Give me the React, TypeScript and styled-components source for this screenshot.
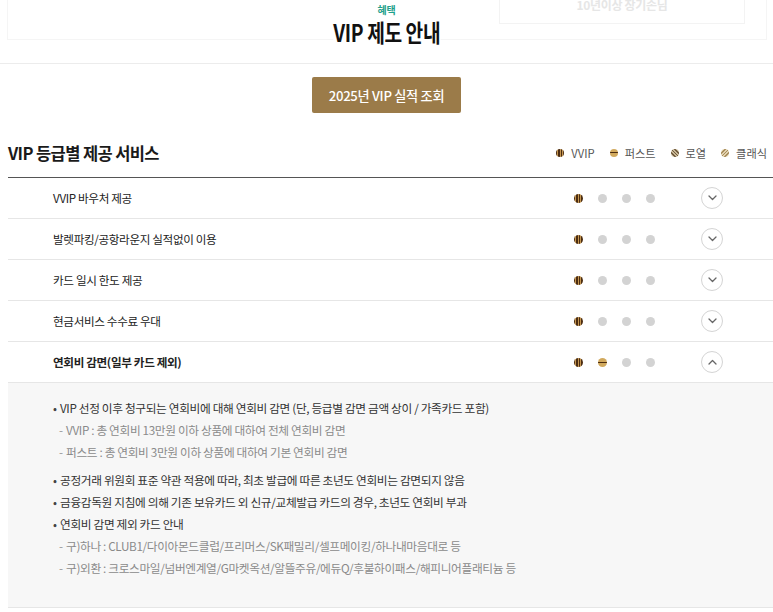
import React from "react";
import styled, { createGlobalStyle, css } from "styled-components";

const GlobalStyle = createGlobalStyle`
  html, body { margin: 0; padding: 0; background: #fff; }
  body {
    font-family: "Noto Sans CJK KR", "Noto Sans", sans-serif;
    color: #222;
    -webkit-font-smoothing: antialiased;
  }
  * { box-sizing: border-box; }
`;

const Page = styled.div`
  position: relative;
  width: 773px;
  overflow: hidden;
`;

const Ghost = styled.div`
  position: absolute;
  z-index: 0;
  top: 0;
  left: 7px;
  width: 760px;
  height: 40px;
  border: 1px solid #f5f5f5;
  border-top: none;
  pointer-events: none;
`;

const GhostInner = styled.div`
  position: absolute;
  top: -1px;
  left: 491px;
  width: 246px;
  height: 25px;
  border: 1px solid #f3f3f3;
  border-top: none;
  display: flex;
  justify-content: center;
  align-items: flex-start;
  font-size: 12px;
  font-weight: 700;
  color: #e6e6e6;
  line-height: 12px;
  letter-spacing: -0.3px;
  overflow: hidden;
`;

const Header = styled.header`
  position: relative;
  z-index: 1;
  height: 64px;
  border-bottom: 1px solid #ececec;
  display: flex;
  flex-direction: column;
  align-items: center;
  padding-top: 4px;
`;

const Eyebrow = styled.div`
  font-size: 10px;
  font-weight: 700;
  color: #1fa18c;
  line-height: 12px;
  letter-spacing: -0.3px;
`;

const Title = styled.h1`
  margin: 3px 0 0;
  font-size: 24px;
  font-weight: 700;
  line-height: 26px;
  letter-spacing: -0.5px;
  color: #111;
  transform: scaleX(0.8);
  background: #fff;
`;

const ButtonRow = styled.div`
  display: flex;
  justify-content: center;
  padding-top: 13px;
`;

const PrimaryButton = styled.button`
  width: 149px;
  height: 36px;
  border: none;
  border-radius: 2px;
  background: #9b7b49;
  color: #fff;
  font-family: inherit;
  font-size: 13.2px;
  font-weight: 500;
  letter-spacing: -0.3px;
  cursor: pointer;
`;

const Section = styled.section`
  margin: 23px 0 0 8px;
`;

const SectionHead = styled.div`
  display: flex;
  align-items: center;
  justify-content: space-between;
  height: 42px;
  padding: 0 6px 8px 0;
  border-bottom: 1px solid #555;
`;

const SectionTitle = styled.h2`
  margin: 0;
  font-size: 16.5px;
  font-weight: 700;
  letter-spacing: -0.6px;
  color: #1a1a1a;
`;

const Legend = styled.ul`
  display: flex;
  gap: 15px;
  margin: 0;
  padding: 0;
  list-style: none;
`;

const LegendItem = styled.li`
  display: flex;
  align-items: center;
  gap: 7px;
  font-size: 11.2px;
  color: #555;
  letter-spacing: 0;
`;

type Grade = "vvip" | "first" | "royal" | "classic" | "off";

const gradeFill: Record<Grade, ReturnType<typeof css>> = {
  vvip: css`
    background: repeating-linear-gradient(90deg, #4b2c10 0 1.4px, #c59650 1.4px 2.4px);
  `,
  first: css`
    background: repeating-linear-gradient(0deg, #d1a95d 0 1.6px, #4b2c10 1.6px 2.5px);
  `,
  royal: css`
    background: repeating-linear-gradient(45deg, #6f5a3e 0 1.3px, #c9b896 1.3px 2.5px);
  `,
  classic: css`
    background: repeating-linear-gradient(-45deg, #a88d5c 0 1.3px, #e2d2ae 1.3px 2.5px);
  `,
  off: css`
    background: #d3d3d3;
  `,
};

const Dot = styled.span<{ $grade: Grade; $size?: number }>`
  display: inline-block;
  flex: none;
  width: ${(p) => p.$size ?? 9}px;
  height: ${(p) => p.$size ?? 9}px;
  border-radius: 50%;
  ${(p) => gradeFill[p.$grade]}
`;

const Row = styled.div`
  display: flex;
  align-items: center;
  height: 41px;
  padding: 0 50px 0 45px;
  border-bottom: 1px solid #e6e6e6;
`;

const RowLabel = styled.div<{ $bold?: boolean }>`
  flex: 1;
  font-size: 11.6px;
  letter-spacing: -0.35px;
  color: #222;
  font-weight: ${(p) => (p.$bold ? 700 : 400)};
`;

const Dots = styled.div`
  display: flex;
  gap: 15px;
`;

const Toggle = styled.button`
  margin-left: 46px;
  width: 22px;
  height: 22px;
  border-radius: 50%;
  border: 1px solid #d4d4d4;
  background: #fff;
  display: flex;
  align-items: center;
  justify-content: center;
  padding: 0;
  cursor: pointer;
`;

const Panel = styled.div`
  background: #f7f7f7;
  border-bottom: 1px solid #e6e6e6;
  padding: 14px 0 28px 45px;
`;

const Group = styled.ul`
  margin: 0;
  padding: 0;
  list-style: none;
  & + & { margin-top: 6px; }
`;

const Bullet = styled.li`
  font-size: 11.7px;
  line-height: 22px;
  color: #333;
  letter-spacing: -0.35px;
  &::before {
    content: "•";
    display: inline-block;
    width: 7px;
    color: #444;
  }
`;

const Sub = styled.li`
  font-size: 11.7px;
  line-height: 22px;
  color: #8a8a8a;
  letter-spacing: -0.35px;
  padding-left: 6px;
  &::before {
    content: "-";
    display: inline-block;
    width: 7px;
    color: #999;
  }
`;

const Chevron = ({ up }: { up?: boolean }) => (
  <svg width="9" height="6" viewBox="0 0 9 6" fill="none">
    <path
      d={up ? "M1 5L4.5 1.5L8 5" : "M1 1L4.5 4.5L8 1"}
      stroke="#666"
      strokeWidth="1.3"
      strokeLinecap="round"
      strokeLinejoin="round"
    />
  </svg>
);

const services: { label: string; grades: Grade[]; open?: boolean }[] = [
  { label: "VVIP 바우처 제공", grades: ["vvip", "off", "off", "off"] },
  { label: "발렛파킹/공항라운지 실적없이 이용", grades: ["vvip", "off", "off", "off"] },
  { label: "카드 일시 한도 제공", grades: ["vvip", "off", "off", "off"] },
  { label: "현금서비스 수수료 우대", grades: ["vvip", "off", "off", "off"] },
  { label: "연회비 감면(일부 카드 제외)", grades: ["vvip", "first", "off", "off"], open: true },
];

const legend: { grade: Grade; label: string }[] = [
  { grade: "vvip", label: "VVIP" },
  { grade: "first", label: "퍼스트" },
  { grade: "royal", label: "로열" },
  { grade: "classic", label: "클래식" },
];

export default function App() {
  return (
    <Page>
      <GlobalStyle />
      <Ghost>
        <GhostInner>10년이상 장기손님</GhostInner>
      </Ghost>
      <Header>
        <Eyebrow>혜택</Eyebrow>
        <Title>VIP 제도 안내</Title>
      </Header>
      <ButtonRow>
        <PrimaryButton>2025년 VIP 실적 조회</PrimaryButton>
      </ButtonRow>
      <Section>
        <SectionHead>
          <SectionTitle>VIP 등급별 제공 서비스</SectionTitle>
          <Legend>
            {legend.map((l) => (
              <LegendItem key={l.label}>
                <Dot $grade={l.grade} $size={8} />
                {l.label}
              </LegendItem>
            ))}
          </Legend>
        </SectionHead>
        {services.map((s) => (
          <React.Fragment key={s.label}>
            <Row>
              <RowLabel $bold={s.open}>{s.label}</RowLabel>
              <Dots>
                {s.grades.map((g, i) => (
                  <Dot key={i} $grade={g} />
                ))}
              </Dots>
              <Toggle aria-label="toggle">
                <Chevron up={s.open} />
              </Toggle>
            </Row>
            {s.open && (
              <Panel>
                <Group>
                  <Bullet>VIP 선정 이후 청구되는 연회비에 대해 연회비 감면 (단, 등급별 감면 금액 상이 / 가족카드 포함)</Bullet>
                  <Sub>VVIP : 총 연회비 13만원 이하 상품에 대하여 전체 연회비 감면</Sub>
                  <Sub>퍼스트 : 총 연회비 3만원 이하 상품에 대하여 기본 연회비 감면</Sub>
                </Group>
                <Group>
                  <Bullet>공정거래 위원회 표준 약관 적용에 따라, 최초 발급에 따른 초년도 연회비는 감면되지 않음</Bullet>
                  <Bullet>금융감독원 지침에 의해 기존 보유카드 외 신규/교체발급 카드의 경우, 초년도 연회비 부과</Bullet>
                  <Bullet>연회비 감면 제외 카드 안내</Bullet>
                  <Sub>구)하나 : CLUB1/다이아몬드클럽/프리머스/SK패밀리/셀프메이킹/하나내마음대로 등</Sub>
                  <Sub>구)외환 : 크로스마일/넘버엔계열/G마켓옥션/알뜰주유/에듀Q/후불하이패스/해피니어플래티늄 등</Sub>
                </Group>
              </Panel>
            )}
          </React.Fragment>
        ))}
      </Section>
    </Page>
  );
}
